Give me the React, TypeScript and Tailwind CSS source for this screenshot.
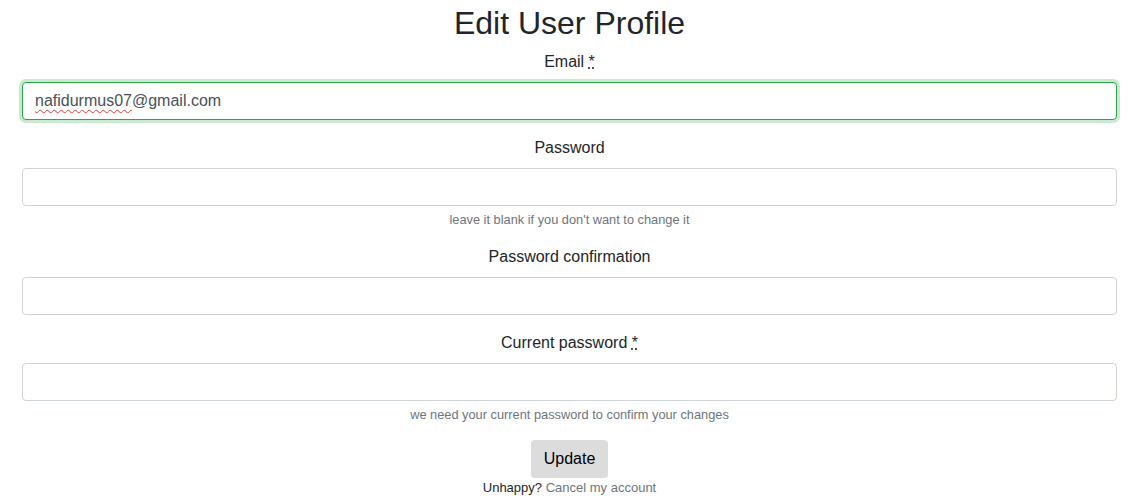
import React from "react";

const fields = [
  { label: "Password", required: false, help: "leave it blank if you don't want to change it" },
  { label: "Password confirmation", required: false, help: "" },
  { label: "Current password", required: true, help: "we need your current password to confirm your changes" },
];

function Req() {
  return (
    <abbr title="required" className="cursor-help underline decoration-dotted">
      *
    </abbr>
  );
}

export default function App() {
  const inputCls =
    "block h-[38px] w-full rounded-[4px] border border-[#ced4da] bg-white px-3 text-base text-[#495057] outline-none";

  return (
    <div className="min-h-screen bg-white pl-[22px] pr-[29px] pt-[3.5px] text-[#212529] [font-family:'Liberation_Sans',Arial,sans-serif]">
      <h2 className="mb-2 text-center text-[32px] leading-[1.2] font-normal">Edit User Profile</h2>
      <form className="text-center" onSubmit={(e) => e.preventDefault()}>
        <div className="mb-4">
          <label className="mb-2 block text-base leading-6">
            Email <Req />
          </label>
          <div
            role="textbox"
            className="flex h-[38px] w-full items-center rounded-[4px] border border-[#28a745] bg-white px-3 text-left text-base text-[#495057] shadow-[0_0_0_3px_rgba(40,167,69,0.25)]"
          >
            <span className="underline decoration-wavy decoration-[#e53935] decoration-1 underline-offset-[3px]">nafidurmus07</span>
            @gmail.com
          </div>
        </div>
        {fields.map((f) => (
          <div key={f.label} className="mb-4">
            <label className="mb-2 block text-base leading-6">
              {f.label} {f.required && <Req />}
            </label>
            <input type="password" className={inputCls} />
            {f.help && <small className="mt-1 block text-[12.8px] leading-[1.5] text-[#6c757d]">{f.help}</small>}
          </div>
        ))}
        <button
          type="submit"
          className="h-[38px] rounded-[4px] bg-[#dcdcdc] px-[12.5px] text-base leading-6 text-black"
        >
          Update
        </button>
        <p className="text-[13px] leading-[1.5]">
          Unhappy?{" "}
          <a href="#" className="text-[#6c757d]">
            Cancel my account
          </a>
        </p>
      </form>
    </div>
  );
}
